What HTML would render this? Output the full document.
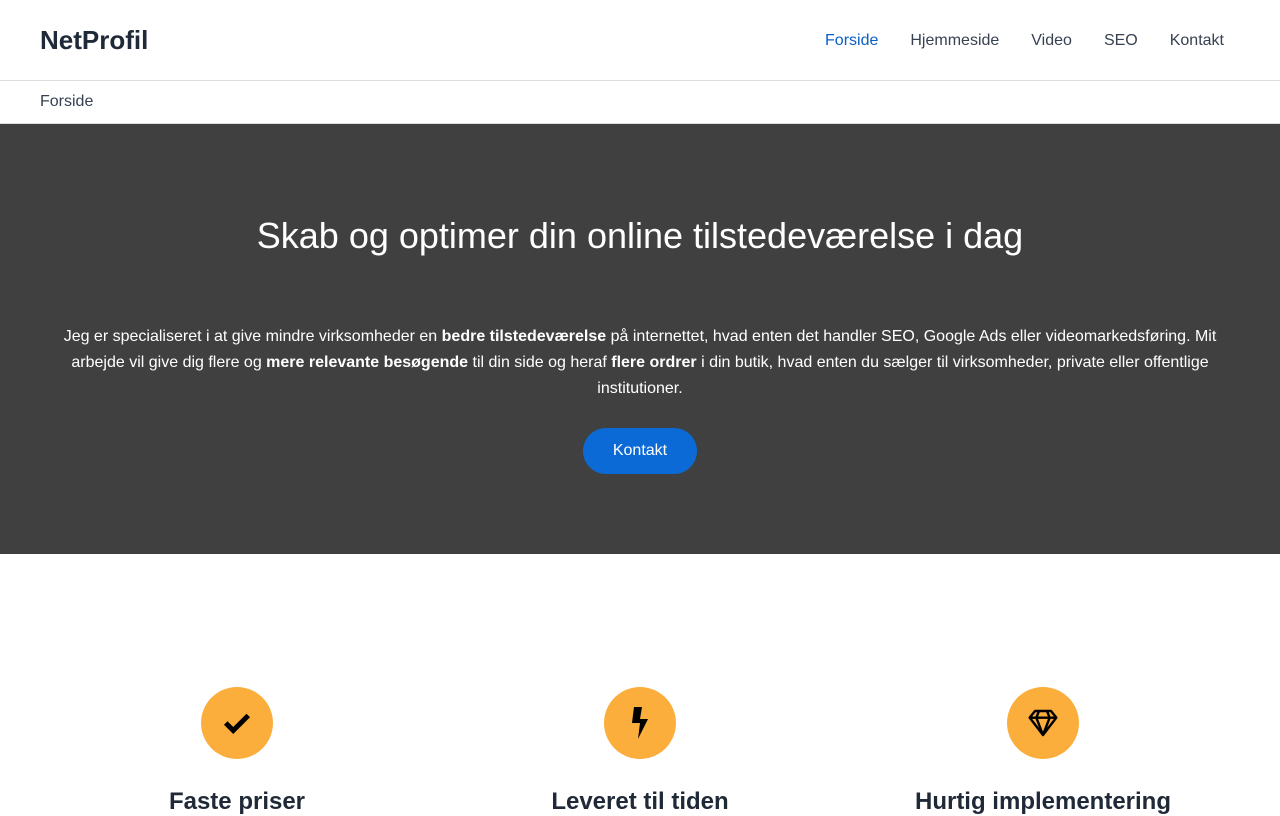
<!DOCTYPE html>
<html><head><meta charset="utf-8"><style>
*{box-sizing:border-box;margin:0;padding:0}
body{width:1280px;height:800px;overflow:hidden;font-family:"Liberation Sans",sans-serif;color:#1f2937;background:#fff}
header{height:81px;border-bottom:1px solid #ddd;display:flex;align-items:center;justify-content:space-between;padding:0 40px}
.logo{font-size:26px;font-weight:bold;color:#1f2937}
nav a{font-size:16px;color:#374151;margin-left:32px;text-decoration:none}
nav a.a{color:#0c5fc4}
nav{margin-right:16px;margin-top:2px}
.bc{height:43px;padding:0 40px;display:flex;align-items:center;font-size:16px;color:#374151;border-bottom:1px solid #ddd}
.hero{height:430px;background:#404040;color:#fff;text-align:center;padding-top:91px}
.hero h1{font-size:36px;font-weight:normal;margin-bottom:67px}
.hero p{font-size:16px;line-height:26px;width:1160px;margin:0 auto}
.btn{display:inline-block;margin-top:26px;background:#0c6ad6;color:#fff;border-radius:23px;padding:0 30px;height:46px;line-height:46px;font-size:16px}
.f{position:absolute;top:687px;width:400px;text-align:center}
.c{width:72px;height:72px;border-radius:50%;background:#fbae3c;margin:0 auto;display:flex;align-items:center;justify-content:center}
.f h3{font-size:24px;margin-top:29px;font-weight:bold;color:#1f2937}
</style></head><body>
<header><div class="logo">NetProfil</div><nav><a class="a">Forside</a><a>Hjemmeside</a><a>Video</a><a>SEO</a><a>Kontakt</a></nav></header>
<div class="bc">Forside</div>
<div class="hero"><h1>Skab og optimer din online tilstedeværelse i dag</h1>
<p>Jeg er specialiseret i at give mindre virksomheder en <b>bedre tilstedeværelse</b> på internettet, hvad enten det handler SEO, Google Ads eller videomarkedsføring. Mit arbejde vil give dig flere og <b>mere relevante besøgende</b> til din side og heraf <b>flere ordrer</b> i din butik, hvad enten du sælger til virksomheder, private eller offentlige institutioner.</p>
<span class="btn">Kontakt</span></div>
<div class="f" style="left:37px"><div class="c"><svg width="30" height="30" viewBox="0 0 24 24"><path d="M3 12l6 6L21 6" stroke="#000" stroke-width="4" fill="none"/></svg></div><h3>Faste priser</h3></div>
<div class="f" style="left:440px"><div class="c"><svg width="24" height="32" viewBox="0 0 12 16"><path d="M3 0h4L6 6h4L5 16l1-8H2z" fill="#000"/></svg></div><h3>Leveret til tiden</h3></div>
<div class="f" style="left:843px"><div class="c"><svg width="32" height="30" viewBox="0 0 24 22"><path d="M6 2h12l4 5-10 13L2 7zM2 7h20M9 2l-2 5 5 13 5-13-2-5" stroke="#000" stroke-width="1.8" fill="none" stroke-linejoin="round"/></svg></div><h3>Hurtig implementering</h3></div>
</body></html>
